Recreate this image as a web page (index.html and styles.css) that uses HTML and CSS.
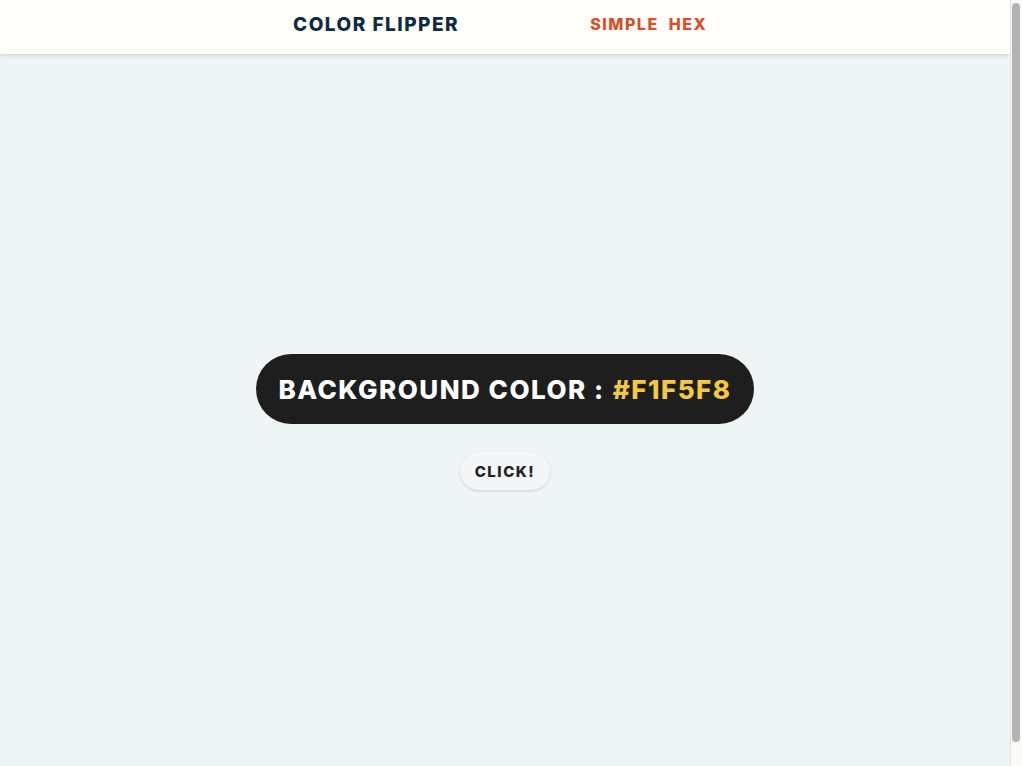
FILE: index.html
```html
<!DOCTYPE html>
<html lang="en">
<head>
<meta charset="UTF-8">
<title>Color Flipper</title>
<link rel="stylesheet" href="styles.css">
</head>
<body>
<div class="page">
  <nav class="nav">
    <div class="nav-center">
      <h4 class="brand">Color Flipper</h4>
      <ul class="nav-links">
        <li><a href="#">simple</a></li>
        <li><a href="#">hex</a></li>
      </ul>
    </div>
  </nav>
  <main class="main">
    <div class="container">
      <h2 class="pill">background color : <span class="color">#F1F5F8</span></h2>
      <button class="btn">click!</button>
    </div>
  </main>
</div>
<div class="scrollbar" aria-hidden="true"><div class="thumb"></div></div>
</body>
</html>
```
FILE: styles.css
```css
* { box-sizing: border-box; margin: 0; padding: 0; }
html, body { height: 100%; overflow: hidden; }
body {
  display: flex;
  font-family: Inter, "Liberation Sans", Arial, sans-serif;
  background: #eff4f5;
  color: #102a42;
}
.page {
  flex: 1;
  min-width: 0;
  height: 100vh;
  overflow: hidden;
}
.scrollbar {
  width: 12px;
  flex: none;
  height: 100vh;
  background: #fafaf8;
  border-left: 1px solid #e2e4e2;
  padding: 3px 2px 24px 1px;
  display: flex;
}
.thumb {
  flex: 1;
  background: #b3b3b3;
  border-radius: 4px;
}
.nav {
  height: 54px;
  background: #fffffc;
  box-shadow: 0 2px 4px rgba(0, 0, 0, 0.12);
  display: flex;
  align-items: center;
  position: relative;
  z-index: 1;
}
.nav-center {
  display: flex;
  align-items: center;
  margin-left: 293px;
  margin-top: -6px;
  gap: 131px;
}
.brand {
  font-size: 19px;
  font-weight: 800;
  text-transform: uppercase;
  letter-spacing: 1.5px;
  color: #102a42;
}
.nav-links {
  list-style: none;
  display: flex;
  gap: 10px;
}
.nav-links a {
  text-decoration: none;
  font-size: 16px;
  font-weight: 800;
  text-transform: uppercase;
  letter-spacing: 1.5px;
  color: #d4502a;
}
.main {
  height: 736px;
  display: flex;
  align-items: center;
  justify-content: center;
}
.container {
  display: flex;
  flex-direction: column;
  align-items: center;
  gap: 28px;
}
.pill {
  background: #1e1e1e;
  color: #ffffff;
  font-size: 26px;
  font-weight: 800;
  text-transform: uppercase;
  letter-spacing: 1.5px;
  height: 70px;
  padding: 0 22px;
  border-radius: 35px;
  display: flex;
  align-items: center;
  gap: 8px;
}
.color { color: #f4c842; }
.btn {
  font-family: inherit;
  font-size: 15px;
  font-weight: 800;
  text-transform: uppercase;
  letter-spacing: 1.5px;
  color: #222222;
  background: #f3f6f8;
  border: none;
  height: 38px;
  padding: 0 15px;
  border-radius: 19px;
  box-shadow: 0 1px 3px rgba(0, 0, 0, 0.15);
}
```
